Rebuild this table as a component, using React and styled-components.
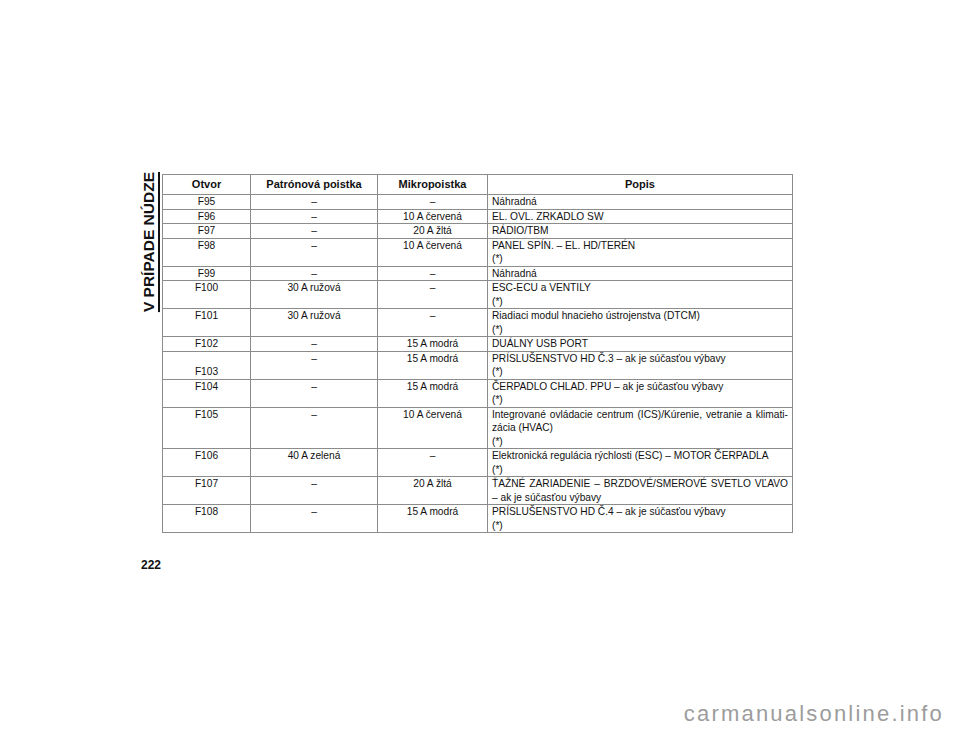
import React from "react";
import styled, { createGlobalStyle } from "styled-components";

const GlobalStyle = createGlobalStyle`
  html, body {
    margin: 0;
    padding: 0;
    background: #ffffff;
  }
  body {
    font-family: "Liberation Sans", Arial, sans-serif;
    color: #1a1a1a;
  }
`;

const Page = styled.div`
  width: 960px;
  min-height: 742px;
  box-sizing: border-box;
  padding: 172px 0 18px 141px;
  display: flex;
  flex-direction: column;
`;

const Content = styled.div`
  display: flex;
  align-items: flex-start;
  gap: 5px;
`;

const SideTitle = styled.div`
  writing-mode: vertical-rl;
  transform: rotate(180deg);
  font-size: 15.5px;
  font-weight: bold;
  line-height: 16px;
  color: #111;
  text-decoration: underline;
  text-decoration-thickness: 1.5px;
  text-underline-offset: 1px;
  white-space: nowrap;
`;

const Table = styled.table`
  border-collapse: collapse;
  table-layout: fixed;
  width: 630px;
  margin-top: 2px;
`;

const HeadCell = styled.th`
  border: 1px solid #8c8c8c;
  font-size: 11px;
  font-weight: bold;
  line-height: 19px;
  padding: 0;
  text-align: center;
  color: #111;
`;

const Cell = styled.td`
  border: 1px solid #8c8c8c;
  font-size: 10.2px;
  line-height: 13.5px;
  padding: ${(p) => (p.$wide ? "0 4px 0 4px" : "0")};
  text-align: ${(p) => (p.$wide ? "left" : "center")};
  vertical-align: ${(p) => (p.$bottom ? "bottom" : "top")};
  color: #111;
`;

const Line = styled.div`
  white-space: ${(p) => (p.$justify ? "normal" : "nowrap")};
  text-align: ${(p) => (p.$justify ? "justify" : "left")};
  text-align-last: ${(p) => (p.$justify ? "justify" : "auto")};
`;

const PageNumber = styled.div`
  margin-top: 25px;
  font-size: 12px;
  font-weight: bold;
  line-height: 14px;
  color: #111;
`;

const Watermark = styled.div`
  margin-top: auto;
  align-self: flex-end;
  padding-right: 16px;
  font-size: 22px;
  letter-spacing: 2.2px;
  line-height: 20px;
  color: #9c9c9c;
`;

const rows = [
  { otvor: "F95", pat: "–", mikro: "–", popis: ["Náhradná"] },
  { otvor: "F96", pat: "–", mikro: "10 A červená", popis: ["EL. OVL. ZRKADLO SW"] },
  { otvor: "F97", pat: "–", mikro: "20 A žltá", popis: ["RÁDIO/TBM"] },
  { otvor: "F98", pat: "–", mikro: "10 A červená", popis: ["PANEL SPÍN. – EL. HD/TERÉN", "(*)"] },
  { otvor: "F99", pat: "–", mikro: "–", popis: ["Náhradná"] },
  { otvor: "F100", pat: "30 A ružová", mikro: "–", popis: ["ESC-ECU a VENTILY", "(*)"] },
  {
    otvor: "F101",
    pat: "30 A ružová",
    mikro: "–",
    popis: ["Riadiaci modul hnacieho ústrojenstva (DTCM)", "(*)"],
  },
  { otvor: "F102", pat: "–", mikro: "15 A modrá", popis: ["DUÁLNY USB PORT"] },
  {
    otvor: "F103",
    pat: "–",
    mikro: "15 A modrá",
    popis: ["PRÍSLUŠENSTVO HD Č.3 – ak je súčasťou výbavy", "(*)"],
    bottom: true,
  },
  {
    otvor: "F104",
    pat: "–",
    mikro: "15 A modrá",
    popis: ["ČERPADLO CHLAD. PPU – ak je súčasťou výbavy", "(*)"],
  },
  {
    otvor: "F105",
    pat: "–",
    mikro: "10 A červená",
    popis: [
      { text: "Integrované ovládacie centrum (ICS)/Kúrenie, vetranie a klimati-", justify: true },
      "zácia (HVAC)",
      "(*)",
    ],
  },
  {
    otvor: "F106",
    pat: "40 A zelená",
    mikro: "–",
    popis: ["Elektronická regulácia rýchlosti (ESC) – MOTOR ČERPADLA", "(*)"],
  },
  {
    otvor: "F107",
    pat: "–",
    mikro: "20 A žltá",
    popis: [
      { text: "ŤAŽNÉ ZARIADENIE – BRZDOVÉ/SMEROVÉ SVETLO VĽAVO", justify: true },
      "– ak je súčasťou výbavy",
    ],
  },
  {
    otvor: "F108",
    pat: "–",
    mikro: "15 A modrá",
    popis: ["PRÍSLUŠENSTVO HD Č.4 – ak je súčasťou výbavy", "(*)"],
  },
];

export default function App() {
  return (
    <>
      <GlobalStyle />
      <Page>
        <Content>
          <SideTitle>V PRÍPADE NÚDZE</SideTitle>
          <Table>
            <colgroup>
              <col style={{ width: 88 }} />
              <col style={{ width: 127 }} />
              <col style={{ width: 110 }} />
              <col style={{ width: 305 }} />
            </colgroup>
            <thead>
              <tr>
                <HeadCell>Otvor</HeadCell>
                <HeadCell>Patrónová poistka</HeadCell>
                <HeadCell>Mikropoistka</HeadCell>
                <HeadCell>Popis</HeadCell>
              </tr>
            </thead>
            <tbody>
              {rows.map((r) => (
                <tr key={r.otvor}>
                  <Cell $bottom={r.bottom}>{r.otvor}</Cell>
                  <Cell>{r.pat}</Cell>
                  <Cell>{r.mikro}</Cell>
                  <Cell $wide>
                    {r.popis.map((l, i) =>
                      typeof l === "string" ? (
                        <Line key={i}>{l}</Line>
                      ) : (
                        <Line key={i} $justify>
                          {l.text}
                        </Line>
                      )
                    )}
                  </Cell>
                </tr>
              ))}
            </tbody>
          </Table>
        </Content>
        <PageNumber>222</PageNumber>
        <Watermark>carmanualsonline.info</Watermark>
      </Page>
    </>
  );
}
